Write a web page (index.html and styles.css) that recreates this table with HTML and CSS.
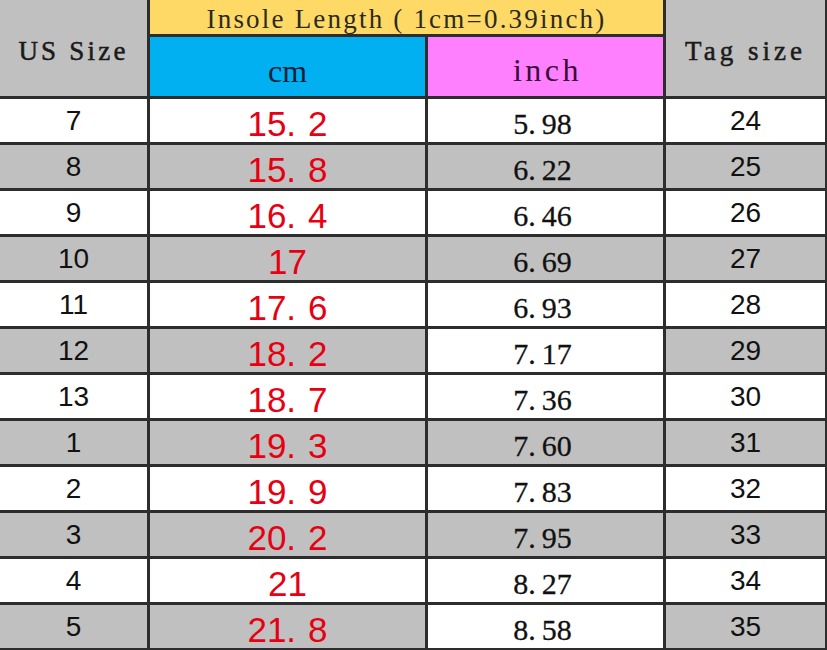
FILE: index.html
```html
<!DOCTYPE html>
<html>
<head>
<meta charset="utf-8">
<link rel="stylesheet" href="styles.css">
</head>
<body>
<div class="chart">
  <div class="cell head side us">US Size</div>
  <div class="cell head insole">Insole Length ( 1cm=0.39inch)</div>
  <div class="cell head tag side">Tag size</div>
  <div class="cell head cmh">cm</div>
  <div class="cell head inchh">inch</div>

  <div class="cell us-n">7</div><div class="cell cm-n">15<span class="dot">.</span>2</div><div class="cell in-n">5<span class="idot">.</span>98</div><div class="cell tg-n">24</div>
  <div class="cell us-n g">8</div><div class="cell cm-n g">15<span class="dot">.</span>8</div><div class="cell in-n g">6<span class="idot">.</span>22</div><div class="cell tg-n g">25</div>
  <div class="cell us-n">9</div><div class="cell cm-n">16<span class="dot">.</span>4</div><div class="cell in-n">6<span class="idot">.</span>46</div><div class="cell tg-n">26</div>
  <div class="cell us-n g">10</div><div class="cell cm-n g">17</div><div class="cell in-n g">6<span class="idot">.</span>69</div><div class="cell tg-n g">27</div>
  <div class="cell us-n">11</div><div class="cell cm-n">17<span class="dot">.</span>6</div><div class="cell in-n">6<span class="idot">.</span>93</div><div class="cell tg-n">28</div>
  <div class="cell us-n g">12</div><div class="cell cm-n g">18<span class="dot">.</span>2</div><div class="cell in-n">7<span class="idot">.</span>17</div><div class="cell tg-n g">29</div>
  <div class="cell us-n">13</div><div class="cell cm-n">18<span class="dot">.</span>7</div><div class="cell in-n">7<span class="idot">.</span>36</div><div class="cell tg-n">30</div>
  <div class="cell us-n g">1</div><div class="cell cm-n g">19<span class="dot">.</span>3</div><div class="cell in-n g">7<span class="idot">.</span>60</div><div class="cell tg-n g">31</div>
  <div class="cell us-n">2</div><div class="cell cm-n">19<span class="dot">.</span>9</div><div class="cell in-n">7<span class="idot">.</span>83</div><div class="cell tg-n">32</div>
  <div class="cell us-n g">3</div><div class="cell cm-n g">20<span class="dot">.</span>2</div><div class="cell in-n g">7<span class="idot">.</span>95</div><div class="cell tg-n g">33</div>
  <div class="cell us-n">4</div><div class="cell cm-n">21</div><div class="cell in-n">8<span class="idot">.</span>27</div><div class="cell tg-n">34</div>
  <div class="cell us-n g">5</div><div class="cell cm-n g">21<span class="dot">.</span>8</div><div class="cell in-n">8<span class="idot">.</span>58</div><div class="cell tg-n g">35</div>
</div>
</body>
</html>
```
FILE: styles.css
```css
html, body {
  margin: 0;
  padding: 0;
  background: #ffffff;
}
.chart {
  width: 827px;
  height: 650px;
  box-sizing: border-box;
  display: grid;
  grid-template-columns: 147px 275px 235px 159px;
  grid-template-rows: 34px 59px repeat(12, 43px);
  gap: 3px;
  padding: 0 2px 2px 0;
  background: #2d2d2d;
}
.cell {
  background: #ffffff;
  display: flex;
  align-items: center;
  justify-content: center;
  white-space: nowrap;
}
.cell.g {
  background: #c0c0c0;
}
.head {
  font-family: "Liberation Serif", serif;
  color: #1a1a1a;
}
.side {
  grid-row: 1 / span 2;
  background: #c0c0c0;
  font-size: 27px;
  font-weight: normal;
  -webkit-text-stroke: 0.5px #1a1a1a;
  letter-spacing: 3.2px;
  padding-top: 6px;
  box-sizing: border-box;
}
.us { grid-column: 1; }
.tag { grid-column: 4; letter-spacing: 4px; }
.insole {
  grid-column: 2 / span 2;
  background: #ffd966;
  font-size: 27px;
  letter-spacing: 2.2px;
  color: #2a2a20;
  padding-top: 4px;
  box-sizing: border-box;
}
.cmh {
  grid-column: 2;
  background: #00b0f0;
  font-size: 32px;
  color: #14203a;
  padding-top: 10px;
  box-sizing: border-box;
}
.inchh {
  grid-column: 3;
  background: #ff80ff;
  font-size: 32px;
  letter-spacing: 3.5px;
  color: #3a0c3a;
  padding-top: 8px;
  padding-left: 4px;
  box-sizing: border-box;
}
.us-n, .tg-n {
  font-family: "Liberation Sans", sans-serif;
  font-size: 28px;
  color: #111;
}
.cm-n {
  font-family: "Liberation Sans", sans-serif;
  font-size: 35px;
  color: #e60012;
  padding-top: 6px;
  box-sizing: border-box;
}
.dot {
  letter-spacing: 12px;
}
.in-n {
  font-family: "Liberation Serif", serif;
  font-size: 30px;
  letter-spacing: 0;
  -webkit-text-stroke: 0.3px #111;
  color: #111;
  padding-top: 6px;
  padding-right: 6px;
  box-sizing: border-box;
}
.idot {
  letter-spacing: 6px;
}
```
